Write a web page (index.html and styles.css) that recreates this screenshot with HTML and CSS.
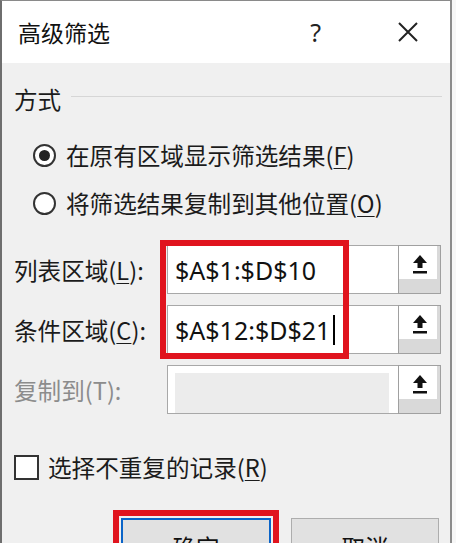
FILE: index.html
```html
<!DOCTYPE html>
<html lang="zh-CN">
<head>
  <meta charset="UTF-8">
  <title>高级筛选</title>
  <link rel="stylesheet" href="styles.css">
</head>
<body>
  <div class="dialog">
    <div class="titlebar">
      <span class="title">高级筛选</span>
      <span class="help">?</span>
      <svg class="close" width="20" height="20" viewBox="0 0 20 20">
        <path d="M1 1 L19 19 M19 1 L1 19" stroke="#222" stroke-width="2" fill="none"/>
      </svg>
    </div>

    <div class="content">
      <div class="group-head">
        <span>方式</span>
        <span class="rule"></span>
      </div>

      <div class="options">
        <div class="opt-row"><span class="radio checked"></span>在原有区域显示筛选结果(<u>F</u>)</div>
        <div class="opt-row"><span class="radio"></span>将筛选结果复制到其他位置(<u>O</u>)</div>
      </div>

      <div class="ranges">
        <div class="range-row">
          <span class="range-label">列表区域(<u>L</u>):</span>
          <div class="field">$A$1:$D$10</div>
          <button class="pick"><svg width="16" height="20" viewBox="0 0 16 20"><path d="M8 1 L15 9 L10.5 9 L10.5 14 L5.5 14 L5.5 9 L1 9 Z" fill="#111"/><rect x="1" y="17" width="14" height="2.5" fill="#111"/></svg></button>
        </div>
        <div class="range-row">
          <span class="range-label">条件区域(<u>C</u>):</span>
          <div class="field">$A$12:$D$21<span class="caret"></span></div>
          <button class="pick"><svg width="16" height="20" viewBox="0 0 16 20"><path d="M8 1 L15 9 L10.5 9 L10.5 14 L5.5 14 L5.5 9 L1 9 Z" fill="#111"/><rect x="1" y="17" width="14" height="2.5" fill="#111"/></svg></button>
        </div>
        <div class="range-row">
          <span class="range-label disabled">复制到(T):</span>
          <div class="field off"><span class="off-fill"></span></div>
          <button class="pick"><svg width="16" height="20" viewBox="0 0 16 20"><path d="M8 1 L15 9 L10.5 9 L10.5 14 L5.5 14 L5.5 9 L1 9 Z" fill="#111"/><rect x="1" y="17" width="14" height="2.5" fill="#111"/></svg></button>
        </div>
        <div class="mark-box"></div>
      </div>

      <div class="check-row"><span class="checkbox"></span>选择不重复的记录(<u>R</u>)</div>

      <div class="actions">
        <button class="btn ok">确定</button>
        <button class="btn">取消</button>
      </div>
    </div>
  </div>
</body>
</html>
```

FILE: styles.css
```css
html, body { margin: 0; padding: 0; }
body { width: 456px; height: 543px; overflow: hidden; background: #f7f7f7; font-family: "Noto Sans CJK SC", sans-serif; color: #1b1b1b; }
u { text-decoration-thickness: 1px; text-underline-offset: 3px; }

.dialog { width: 448px; height: 600px; border-left: 2px solid #6e6e6e; border-right: 2px solid #8c8c8c; border-top: 1px solid #8a8a8a; background: #f0f0f0; }

.titlebar { height: 62px; background: #fff; display: flex; align-items: center; padding-left: 16px; }
.title { flex: 1; font-size: 23px; color: #111; }
.help { font-family: "Noto Sans", sans-serif; font-size: 25px; color: #222; margin-right: 77px; }
.close { margin-right: 32px; }

.content { padding: 21px 8px 0 12px; font-size: 23.6px; }

.group-head { height: 30px; display: flex; align-items: center; gap: 10px; }
.group-head .rule { flex: 1; height: 1px; background: #d6d6d6; margin-top: -5px; }

.options { margin-top: 17px; padding-left: 19px; }
.opt-row { height: 48px; display: flex; align-items: center; }
.radio { width: 19px; height: 19px; border: 2px solid #333; border-radius: 50%; background: #fff; margin-right: 10px; display: flex; align-items: center; justify-content: center; }
.radio.checked::after { content: ""; width: 11px; height: 11px; border-radius: 50%; background: #222; }

.ranges { position: relative; margin-top: 18px; display: grid; row-gap: 11px; }
.range-row { display: grid; grid-template-columns: 153px 231px 43px; height: 49px; align-items: center; }
.range-label.disabled { color: #8c8c8c; }
.field { height: 100%; box-sizing: border-box; border: 1px solid #a8a8a8; border-right: none; background: #fff; display: flex; align-items: center; padding-left: 7px; font-family: "Noto Sans", sans-serif; font-size: 25px; color: #111; }
.caret { width: 1.5px; height: 30px; background: #000; margin-left: 3px; }
.field.off { padding: 7px 9px 0 7px; align-items: stretch; }
.off-fill { flex: 1; background: #ececec; }
.pick { height: 100%; box-sizing: border-box; border: 1px solid #a0a0a0; background: #fff; box-shadow: inset -3px -14px 0 #d9d9d9; padding: 0 0 12px 0; margin: 0; display: flex; align-items: center; justify-content: center; }

.mark-box { position: absolute; left: 146px; top: -5px; width: 177px; height: 107px; border: 6px solid #e0141e; }

.check-row { margin-top: 38px; height: 30px; display: flex; align-items: center; }
.checkbox { width: 21px; height: 21px; border: 2px solid #333; background: #fff; margin-right: 9px; }

.actions { margin-top: 36px; display: flex; justify-content: flex-end; gap: 20px; padding-right: 3px; }
.btn { width: 148px; height: 52px; box-sizing: border-box; border: 1px solid #adadad; background: #e1e1e1; padding-top: 6px; font-family: "Noto Sans CJK SC", sans-serif; font-size: 23.6px; color: #111; }
.btn.ok { width: 150px; border: 2px solid #0a64c8; outline: 6px solid #e0141e; outline-offset: 2px; }
```
